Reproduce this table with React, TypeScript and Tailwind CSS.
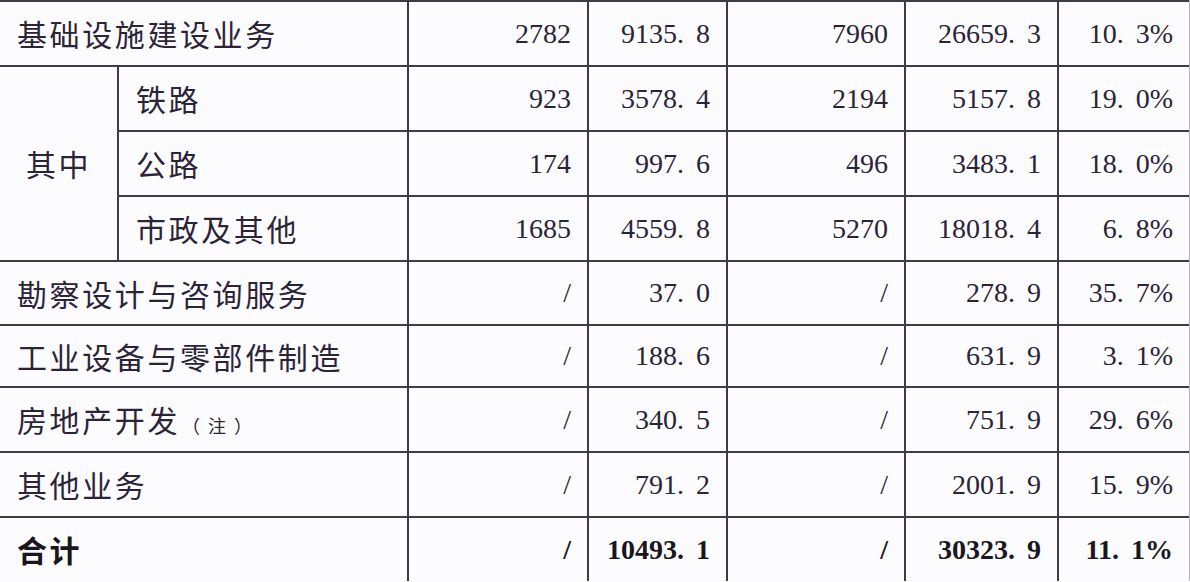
const rows: {
  name: string;
  sub?: boolean;
  note?: string;
  v: string[];
  bold?: boolean;
  h: string;
}[] = [
  { name: "基础设施建设业务", v: ["2782", "9135.8", "7960", "26659.3", "10.3%"], h: "h-[65px]" },
  { name: "铁路", sub: true, v: ["923", "3578.4", "2194", "5157.8", "19.0%"], h: "h-[65px]" },
  { name: "公路", sub: true, v: ["174", "997.6", "496", "3483.1", "18.0%"], h: "h-[65px]" },
  { name: "市政及其他", sub: true, v: ["1685", "4559.8", "5270", "18018.4", "6.8%"], h: "h-[65px]" },
  { name: "勘察设计与咨询服务", v: ["/", "37.0", "/", "278.9", "35.7%"], h: "h-[64px]" },
  { name: "工业设备与零部件制造", v: ["/", "188.6", "/", "631.9", "3.1%"], h: "h-[62px]" },
  { name: "房地产开发", note: "（注）", v: ["/", "340.5", "/", "751.9", "29.6%"], h: "h-[65px]" },
  { name: "其他业务", v: ["/", "791.2", "/", "2001.9", "15.9%"], h: "h-[65px]" },
  { name: "合计", v: ["/", "10493.1", "/", "30323.9", "11.1%"], bold: true, h: "h-[64px]" },
];

function Num({ text }: { text: string }) {
  const i = text.indexOf(".");
  if (i < 0) return <>{text}</>;
  return (
    <>
      {text.slice(0, i)}
      <span className="inline-block w-[19px] text-left">.</span>
      {text.slice(i + 1)}
    </>
  );
}

const cjk = "font-['Noto_Sans_CJK_SC',sans-serif] text-[30px] tracking-[2.6px]";
const num = "font-['Liberation_Serif','Noto_Sans_CJK_SC',serif] text-[28px] text-right pr-[16px]";

export default function App() {
  return (
    <div className="h-[582px] w-[1190px] overflow-hidden bg-[#fcfcfe] text-[#2b2438]">
      <table className="w-[1190px] table-fixed border-collapse border-t-2 border-t-[#3f3a44]">
        <colgroup>
          <col className="w-[118px]" />
          <col className="w-[290px]" />
          <col className="w-[180px]" />
          <col className="w-[139px]" />
          <col className="w-[178px]" />
          <col className="w-[153px]" />
          <col className="w-[132px]" />
        </colgroup>
        <tbody>
          {rows.map((r, idx) => (
            <tr key={r.name} className={`${r.h} ${idx > 0 ? "border-t-2 border-t-[#3f3a44]" : ""}`}>
              {idx === 1 && (
                <td
                  rowSpan={3}
                  className={`${cjk} border-r-2 border-r-[#3f3a44] text-center`}
                >
                  其中
                </td>
              )}
              <td
                colSpan={r.sub ? 1 : 2}
                className={`${cjk} whitespace-nowrap pl-[17px] ${
                  r.bold ? "font-bold text-[#1a1620]" : ""
                }`}
              >
                {r.name}
                {r.note && (
                  <span className="ml-[2px] text-[18px] tracking-[8px] align-[-1px]">{r.note}</span>
                )}
              </td>
              {r.v.map((val, j) => (
                <td
                  key={j}
                  className={`${num} border-l-2 border-l-[#3f3a44] ${
                    j === 4 ? "border-r-2 border-r-[#b8b0c0]" : ""
                  } ${r.bold ? "font-bold text-[#1a1620]" : ""}`}
                >
                  <Num text={val} />
                </td>
              ))}
            </tr>
          ))}
        </tbody>
      </table>
    </div>
  );
}
